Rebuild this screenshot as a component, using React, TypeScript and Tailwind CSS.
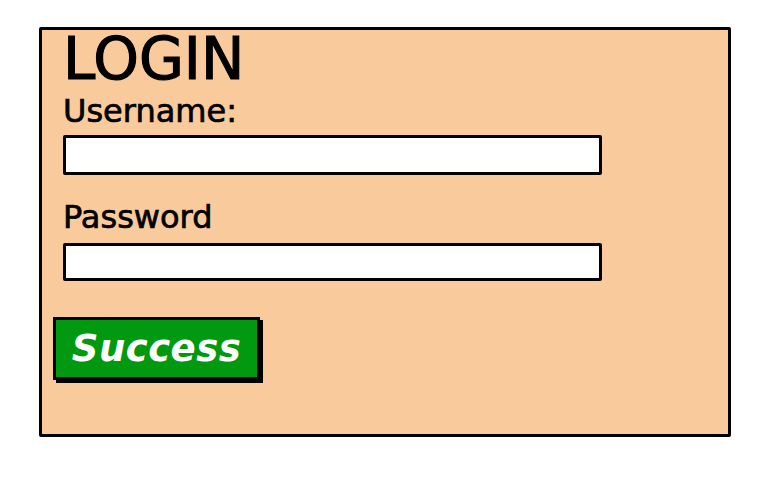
import React from "react";

const Field = ({ label }: { label: string }) => (
	<div className="flex flex-col">
		<label className="text-[32px] leading-none text-black [-webkit-text-stroke:0.7px_black]">
			{label}
		</label>
	</div>
);

const App = () => {
	return (
		<div
			className="w-[769px] h-[477px] bg-white pl-[39px] pt-[27px]"
			style={{ fontFamily: '"DejaVu Sans", sans-serif' }}
		>
			<div className="w-[692px] h-[410px] border-[3px] border-black rounded-[2px] bg-[#F8CA9C] flex flex-col">
				<div className="pl-[21px] flex flex-col">
					<h1 className="text-[58px] leading-none text-black [-webkit-text-stroke:1.2px_black]">
						LOGIN
					</h1>
					<div className="mt-[7px]">
						<Field label="Username:" />
					</div>
					<input
						type="text"
						className="mt-[8px] w-[539px] h-[40px] bg-white border-[3px] border-black rounded-[2px] outline-none"
					/>
					<div className="mt-[26px]">
						<Field label="Password" />
					</div>
					<input
						type="password"
						className="mt-[10px] w-[539px] h-[38px] bg-white border-[3px] border-black rounded-[2px] outline-none"
					/>
				</div>
				<button className="ml-[11px] mt-[36px] w-[207px] h-[63px] bg-[#00990F] border-[3px] border-black shadow-[3px_3px_0_#000] flex items-center justify-center text-white text-[37px] font-bold italic leading-none tracking-[0.5px]">
					Success
				</button>
			</div>
		</div>
	);
};

export default App;
